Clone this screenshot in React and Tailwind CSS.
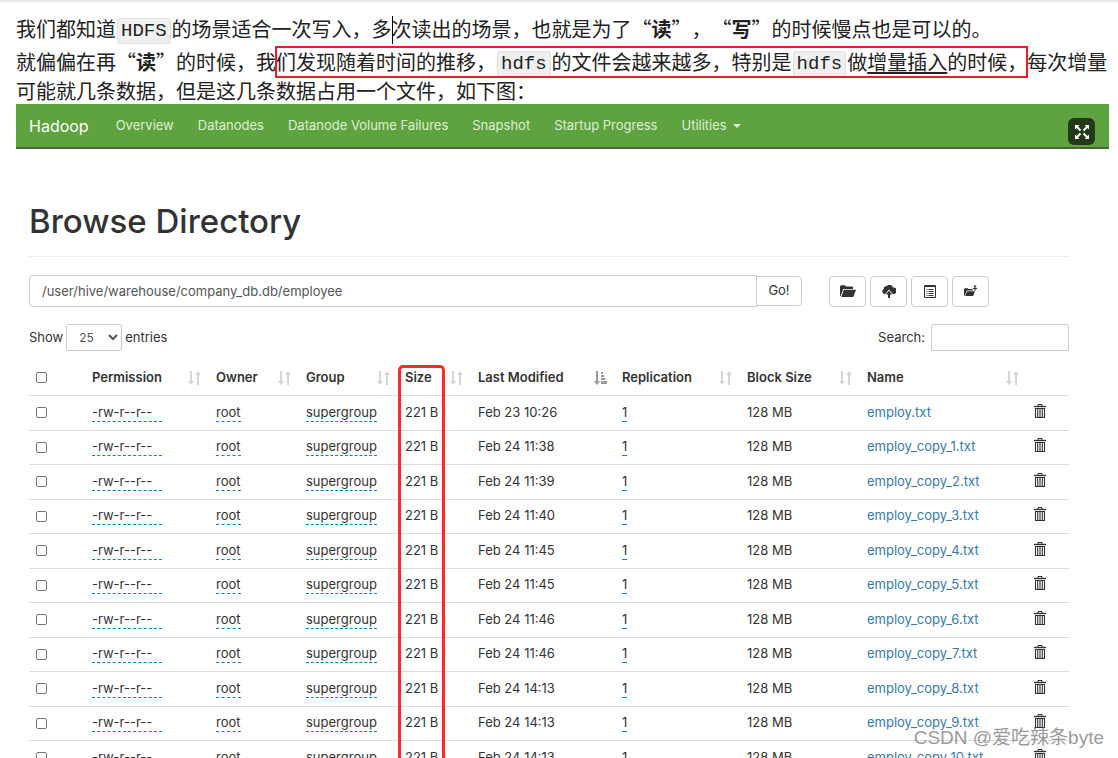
import { useState } from "react";

const navItems = ["Overview", "Datanodes", "Datanode Volume Failures", "Snapshot", "Startup Progress"];

const columns = [
  { name: "Permission", width: "w-[124px]" },
  { name: "Owner", width: "w-[90px]" },
  { name: "Group", width: "w-[99px]" },
  { name: "Size", width: "w-[73px]" },
  { name: "Last Modified", width: "w-[144px]", sorted: true },
  { name: "Replication", width: "w-[125px]" },
  { name: "Block Size", width: "w-[120px]" },
  { name: "Name", width: "" },
];

const files = [
  { name: "employ.txt", modified: "Feb 23 10:26" },
  { name: "employ_copy_1.txt", modified: "Feb 24 11:38" },
  { name: "employ_copy_2.txt", modified: "Feb 24 11:39" },
  { name: "employ_copy_3.txt", modified: "Feb 24 11:40" },
  { name: "employ_copy_4.txt", modified: "Feb 24 11:45" },
  { name: "employ_copy_5.txt", modified: "Feb 24 11:45" },
  { name: "employ_copy_6.txt", modified: "Feb 24 11:46" },
  { name: "employ_copy_7.txt", modified: "Feb 24 11:46" },
  { name: "employ_copy_8.txt", modified: "Feb 24 14:13" },
  { name: "employ_copy_9.txt", modified: "Feb 24 14:13" },
  { name: "employ_copy_10.txt", modified: "Feb 24 14:13" },
];

function Code({ children }) {
  return (
    <code className="mx-px mb-[2px] inline-block h-[26px] rounded-[3px] border border-[#e0e0e0] bg-[#f0f0f0] px-[3px] align-middle font-['Liberation_Mono',monospace] text-[19px] leading-[25px]">
      {children}
    </code>
  );
}

function SortIcon({ sorted }) {
  return (
    <svg viewBox="0 0 13 14" className={sorted ? "h-[14px] w-[13px] shrink-0 text-[#999]" : "h-[14px] w-[13px] shrink-0 text-[#d6d6d6]"} fill="currentColor">
      <path d="M2 0h2v10h2L3 14 0 10h2z" />
      {sorted ? (
        <path d="M7 1h2v2H7zM7 4h3v2H7zM7 7h4.5v2H7zM7 10h6v3H7z" />
      ) : (
        <path d="M9 14h2V4h2L10 0 7 4h2z" />
      )}
    </svg>
  );
}

function TrashIcon() {
  return (
    <svg viewBox="0 0 12 14" className="h-[14px] w-[12px]" fill="none" stroke="#333">
      <path d="M4 2V.5h4V2" />
      <path d="M0 2.5h12" strokeWidth="1.4" />
      <path d="M1.5 4.5v9h9v-9zM3.7 5v8M6 5v8M8.3 5v8" strokeWidth="1.1" />
    </svg>
  );
}

function FolderIcon() {
  return (
    <svg viewBox="0 0 16 12" className="h-[12px] w-[16px]" fill="#333">
      <path d="M0 11V1.5L1 .3h4l1 1.2h6.5l.5 1V4H3.2L.7 11z" />
      <path d="M3.8 4.8H16L13.3 12H1.3z" />
    </svg>
  );
}

function UploadIcon() {
  return (
    <svg viewBox="0 0 14 13" className="h-[13px] w-[14px]" fill="#333">
      <path d="M2.8 9A2.7 2.7 0 0 1 1.6 4 3.3 3.3 0 0 1 4.7 1 3.7 3.7 0 0 1 11 2.4 3 3 0 0 1 11.5 9h-.7L7 4.6 3.2 9z" />
      <path d="M7 5.8l3.3 3.8H8V13H6V9.6H3.7z" />
    </svg>
  );
}

function ListIcon() {
  return (
    <svg viewBox="0 0 12 13" className="h-[13px] w-[12px]" fill="none" stroke="#333">
      <path d="M.5.5h11v12H.5zM.5 1.5h11" />
      <path d="M2.5 4.5h1M4.5 4.5h5M2.5 6.5h1M4.5 6.5h5M2.5 8.5h1M4.5 8.5h5M2.5 10.5h1M4.5 10.5h5" />
    </svg>
  );
}

function MoveIcon() {
  return (
    <svg viewBox="0 0 13 12" className="h-[12px] w-[13px]" fill="#333">
      <path d="M0 10.5V4l.8-.8h3l.8.8h4v1.6H3L.8 10.5z" />
      <path d="M3.3 6.2H11L9.2 11H1.2z" />
      <path d="M9.2 3h1.2V1.8H9.2L11 0l1.800 1.800h-1.300V3H13v1h-1.500v1.800h-1.100V4H8.500z" />
    </svg>
  );
}

function ExpandIcon() {
  return (
    <svg viewBox="0 0 16 16" className="size-4" fill="none" stroke="#fff" strokeWidth="2">
      <path d="M3 3l3.5 3.5M13 3L9.5 6.5M3 13l3.5-3.5M13 13L9.5 9.5" />
      <path d="M1 1h4.5L1 5.5zM15 1h-4.5L15 5.5zM1 15h4.5L1 10.5zM15 15h-4.5l4.5-4.5z" fill="#fff" stroke="none" />
    </svg>
  );
}

function Article() {
  return (
    <div className="relative whitespace-nowrap pl-4 pt-3 font-['Noto_Sans_CJK_SC',sans-serif] text-[20px] text-[#222] [text-spacing-trim:space-all]">
      <p className="h-[34px] leading-[34px]">
        我们都知道<Code>HDFS</Code>的场景适合一次写入，多次读出的场景，也就是为了“<b>读</b>”，“<b>写</b>”的时候慢点也是可以的。
      </p>
      <p className="h-8 leading-8">
        就偏偏在再“<b>读</b>”的时候，我们发现随着时间的推移，<Code>hdfs</Code>的文件会越来越多，特别是<Code>hdfs</Code>做
        <u className="underline-offset-2">增量插入</u>的时候，每次增量
      </p>
      <p className="h-[26px] leading-[26px]">可能就几条数据，但是这几条数据占用一个文件，如下图：</p>
      <span className="absolute left-[392px] top-4 h-7 w-px bg-black" />
      <span className="absolute left-[275px] top-[46px] h-8 w-[753px] border-2 border-[#ed1c24]" />
    </div>
  );
}

function Navbar() {
  return (
    <nav className="relative flex h-[45px] items-center border-b-2 border-[#4c6340] bg-[#5fa341] pl-[13px] text-[13px] text-[#dcf0d2]">
      <a href="#" className="mr-[27px] text-base text-white">Hadoop</a>
      <div className="flex gap-6">
        {navItems.map((item) => (
          <a href="#" key={item}>{item}</a>
        ))}
        <a href="#" className="flex items-center gap-[6px]">
          Utilities
          <svg viewBox="0 0 8 4" className="h-1 w-2" fill="currentColor">
            <path d="M0 0h8L4 4z" />
          </svg>
        </a>
      </div>
      <button aria-label="Fullscreen" className="absolute right-[14px] top-[14px] flex size-[27px] items-center justify-center rounded-md bg-[#24391a]">
        <ExpandIcon />
      </button>
    </nav>
  );
}

function App() {
  const [path, setPath] = useState("/user/hive/warehouse/company_db.db/employee");
  const [search, setSearch] = useState("");

  const toolButton = "flex h-[31px] w-[37px] items-center justify-center rounded border border-[#ccc]";
  const checkbox = "block size-[11px] appearance-none rounded-[2px] border border-[#767676] bg-white checked:bg-[#337ab7]";
  const editable = "inline-block border-b border-dashed border-[#0088cc] leading-[17px]";

  return (
    <div className="relative h-screen overflow-hidden bg-white font-['Inter',sans-serif] text-[13px] text-[#333]">
      <div className="absolute inset-x-0 top-0 h-1 border-t border-[#e4e4e4] bg-linear-to-b from-[#efefef] to-white" />
      <Article />

      <div className="ml-4 mr-[9px]">
        <Navbar />

        <main className="pl-[13px] pr-10">
          <h1 className="mb-[18px] border-b border-[#eee] pb-[15px] pt-[52px] text-[33px] font-medium leading-10">Browse Directory</h1>

          <div className="flex items-center">
            <input
              aria-label="Directory"
              value={path}
              onChange={(e) => setPath(e.target.value)}
              className="h-8 min-w-0 flex-1 rounded-l border border-[#ccc] px-3 text-[#555]"
            />
            <button className="-ml-px h-[30px] w-[46px] rounded-r border border-[#ccc]">Go!</button>
            <div className="ml-[27px] mr-20 flex gap-1">
              <button aria-label="Create directory" className={toolButton}><FolderIcon /></button>
              <button aria-label="Upload files" className={toolButton}><UploadIcon /></button>
              <button aria-label="List" className={toolButton}><ListIcon /></button>
              <button aria-label="Move" className={toolButton}><MoveIcon /></button>
            </div>
          </div>

          <div className="mt-[17px] flex items-center justify-between">
            <label className="flex items-center gap-[3px]">
              Show
              <select defaultValue="25" className="h-[27px] w-14 rounded-[2px] border border-[#ccc] bg-white pl-2 text-[12px] text-[#555]">
                <option>10</option>
                <option>25</option>
                <option>50</option>
                <option>100</option>
              </select>
              entries
            </label>
            <label className="flex items-center gap-[6px]">
              Search:
              <input
                value={search}
                onChange={(e) => setSearch(e.target.value)}
                className="h-[27px] w-[138px] rounded-[2px] border border-[#ccc] px-2"
              />
            </label>
          </div>

          <div className="relative mt-[10px]">
            <table className="w-full table-fixed border-collapse text-left">
              <thead>
                <tr className="h-[34px]">
                  <th className="w-[56px] px-[7px]">
                    <input type="checkbox" aria-label="Select all" className={checkbox} />
                  </th>
                  {columns.map((col) => (
                    <th key={col.name} className={`${col.width} pl-[7px] pr-2 font-semibold`}>
                      <div className="flex items-center justify-between">
                        {col.name}
                        <SortIcon sorted={col.sorted} />
                      </div>
                    </th>
                  ))}
                  <th className="w-[42px]" />
                </tr>
              </thead>
              <tbody>
                {files.map((file) => (
                  <tr key={file.name} className="border-t border-[#ddd] odd:h-[35px] even:h-[34px]">
                    <td className="px-[7px]">
                      <input type="checkbox" aria-label={file.name} className={checkbox} />
                    </td>
                    <td className="px-[7px]"><span className={`${editable} min-w-[70px]`}>-rw-r--r--</span></td>
                    <td className="px-[7px]"><span className={editable}>root</span></td>
                    <td className="px-[7px]"><span className={editable}>supergroup</span></td>
                    <td className="whitespace-nowrap pl-[7px]">221 B</td>
                    <td className="px-[7px]">{file.modified}</td>
                    <td className="px-[7px]"><span className={editable}>1</span></td>
                    <td className="px-[7px]">128 MB</td>
                    <td className="px-[7px]">
                      <a href="#" className="text-[#337ab7]">{file.name}</a>
                    </td>
                    <td className="px-[7px] pb-1">
                      <button aria-label={`Delete ${file.name}`} className="block"><TrashIcon /></button>
                    </td>
                  </tr>
                ))}
              </tbody>
            </table>
            {/* highlight around the Size column */}
            <div className="pointer-events-none absolute -bottom-4 left-[369px] top-1 w-[47px] rounded-[5px] border-3 border-[#fb2d20]" />
          </div>
        </main>
      </div>

      <p className="absolute bottom-1 right-[14px] whitespace-nowrap font-['Liberation_Sans','Noto_Sans_CJK_SC',sans-serif] text-[19px] leading-8 text-[#808080]/80">
        CSDN @爱吃辣条byte
      </p>
    </div>
  );
}

export default App;
